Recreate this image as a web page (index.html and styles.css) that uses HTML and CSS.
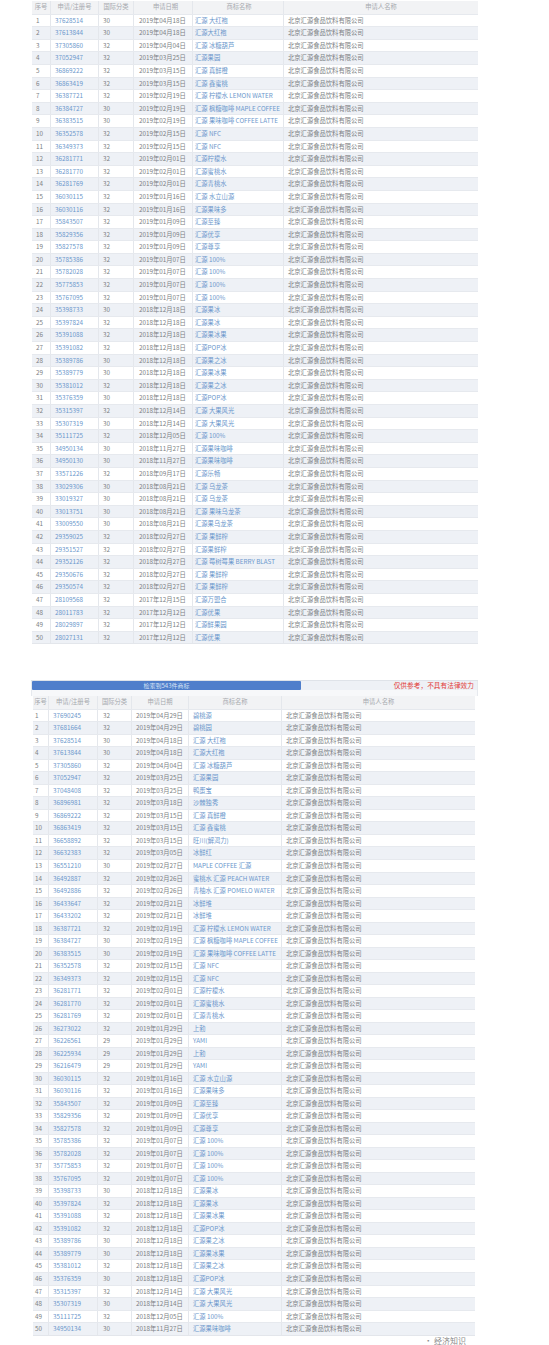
FILE: index.html
```html
<!DOCTYPE html>
<html lang="zh-CN">
<head>
<meta charset="utf-8">
<title>商标列表</title>
<link rel="stylesheet" href="styles.css">
</head>
<body>
<section class="sheet sheet-a">
  <div class="row head"><span>序号</span><span>申请/注册号</span><span>国际分类</span><span>申请日期</span><span>商标名称</span><span>申请人名称</span></div>
  <div class="rows">
    <div class="row"><span>1</span><span class="lk">37628514</span><span>30</span><span>2019年04月18日</span><span class="lk">汇源 大红袍</span><span>北京汇源食品饮料有限公司</span></div>
    <div class="row"><span>2</span><span class="lk">37613844</span><span>30</span><span>2019年04月18日</span><span class="lk">汇源大红袍</span><span>北京汇源食品饮料有限公司</span></div>
    <div class="row"><span>3</span><span class="lk">37305860</span><span>32</span><span>2019年04月04日</span><span class="lk">汇源 冰糖葫芦</span><span>北京汇源食品饮料有限公司</span></div>
    <div class="row"><span>4</span><span class="lk">37052947</span><span>32</span><span>2019年03月25日</span><span class="lk">汇源果园</span><span>北京汇源食品饮料有限公司</span></div>
    <div class="row"><span>5</span><span class="lk">36869222</span><span>32</span><span>2019年03月15日</span><span class="lk">汇源 真鲜橙</span><span>北京汇源食品饮料有限公司</span></div>
    <div class="row"><span>6</span><span class="lk">36863419</span><span>32</span><span>2019年03月15日</span><span class="lk">汇源 鑫蜜桃</span><span>北京汇源食品饮料有限公司</span></div>
    <div class="row"><span>7</span><span class="lk">36387721</span><span>32</span><span>2019年02月19日</span><span class="lk">汇源 柠檬水 LEMON WATER</span><span>北京汇源食品饮料有限公司</span></div>
    <div class="row"><span>8</span><span class="lk">36384727</span><span>30</span><span>2019年02月19日</span><span class="lk">汇源 枫糖咖啡 MAPLE COFFEE</span><span>北京汇源食品饮料有限公司</span></div>
    <div class="row"><span>9</span><span class="lk">36383515</span><span>30</span><span>2019年02月19日</span><span class="lk">汇源 果味咖啡 COFFEE LATTE</span><span>北京汇源食品饮料有限公司</span></div>
    <div class="row"><span>10</span><span class="lk">36352578</span><span>32</span><span>2019年02月15日</span><span class="lk">汇源 NFC</span><span>北京汇源食品饮料有限公司</span></div>
    <div class="row"><span>11</span><span class="lk">36349373</span><span>32</span><span>2019年02月15日</span><span class="lk">汇源 NFC</span><span>北京汇源食品饮料有限公司</span></div>
    <div class="row"><span>12</span><span class="lk">36281771</span><span>32</span><span>2019年02月01日</span><span class="lk">汇源柠檬水</span><span>北京汇源食品饮料有限公司</span></div>
    <div class="row"><span>13</span><span class="lk">36281770</span><span>32</span><span>2019年02月01日</span><span class="lk">汇源蜜桃水</span><span>北京汇源食品饮料有限公司</span></div>
    <div class="row"><span>14</span><span class="lk">36281769</span><span>32</span><span>2019年02月01日</span><span class="lk">汇源青桃水</span><span>北京汇源食品饮料有限公司</span></div>
    <div class="row"><span>15</span><span class="lk">36030115</span><span>32</span><span>2019年01月16日</span><span class="lk">汇源 水立山源</span><span>北京汇源食品饮料有限公司</span></div>
    <div class="row"><span>16</span><span class="lk">36030116</span><span>32</span><span>2019年01月16日</span><span class="lk">汇源果味多</span><span>北京汇源食品饮料有限公司</span></div>
    <div class="row"><span>17</span><span class="lk">35843507</span><span>32</span><span>2019年01月09日</span><span class="lk">汇源至臻</span><span>北京汇源食品饮料有限公司</span></div>
    <div class="row"><span>18</span><span class="lk">35829356</span><span>32</span><span>2019年01月09日</span><span class="lk">汇源优享</span><span>北京汇源食品饮料有限公司</span></div>
    <div class="row"><span>19</span><span class="lk">35827578</span><span>32</span><span>2019年01月09日</span><span class="lk">汇源尊享</span><span>北京汇源食品饮料有限公司</span></div>
    <div class="row"><span>20</span><span class="lk">35785386</span><span>32</span><span>2019年01月07日</span><span class="lk">汇源 100%</span><span>北京汇源食品饮料有限公司</span></div>
    <div class="row"><span>21</span><span class="lk">35782028</span><span>32</span><span>2019年01月07日</span><span class="lk">汇源 100%</span><span>北京汇源食品饮料有限公司</span></div>
    <div class="row"><span>22</span><span class="lk">35775853</span><span>32</span><span>2019年01月07日</span><span class="lk">汇源 100%</span><span>北京汇源食品饮料有限公司</span></div>
    <div class="row"><span>23</span><span class="lk">35767095</span><span>32</span><span>2019年01月07日</span><span class="lk">汇源 100%</span><span>北京汇源食品饮料有限公司</span></div>
    <div class="row"><span>24</span><span class="lk">35398733</span><span>30</span><span>2018年12月18日</span><span class="lk">汇源果冰</span><span>北京汇源食品饮料有限公司</span></div>
    <div class="row"><span>25</span><span class="lk">35397824</span><span>32</span><span>2018年12月18日</span><span class="lk">汇源果冰</span><span>北京汇源食品饮料有限公司</span></div>
    <div class="row"><span>26</span><span class="lk">35391088</span><span>32</span><span>2018年12月18日</span><span class="lk">汇源果冰果</span><span>北京汇源食品饮料有限公司</span></div>
    <div class="row"><span>27</span><span class="lk">35391082</span><span>32</span><span>2018年12月18日</span><span class="lk">汇源POP冰</span><span>北京汇源食品饮料有限公司</span></div>
    <div class="row"><span>28</span><span class="lk">35389786</span><span>30</span><span>2018年12月18日</span><span class="lk">汇源果之冰</span><span>北京汇源食品饮料有限公司</span></div>
    <div class="row"><span>29</span><span class="lk">35389779</span><span>30</span><span>2018年12月18日</span><span class="lk">汇源果冰果</span><span>北京汇源食品饮料有限公司</span></div>
    <div class="row"><span>30</span><span class="lk">35381012</span><span>32</span><span>2018年12月18日</span><span class="lk">汇源果之冰</span><span>北京汇源食品饮料有限公司</span></div>
    <div class="row"><span>31</span><span class="lk">35376359</span><span>30</span><span>2018年12月18日</span><span class="lk">汇源POP冰</span><span>北京汇源食品饮料有限公司</span></div>
    <div class="row"><span>32</span><span class="lk">35315397</span><span>32</span><span>2018年12月14日</span><span class="lk">汇源 大果风光</span><span>北京汇源食品饮料有限公司</span></div>
    <div class="row"><span>33</span><span class="lk">35307319</span><span>30</span><span>2018年12月14日</span><span class="lk">汇源 大果风光</span><span>北京汇源食品饮料有限公司</span></div>
    <div class="row"><span>34</span><span class="lk">35111725</span><span>32</span><span>2018年12月05日</span><span class="lk">汇源 100%</span><span>北京汇源食品饮料有限公司</span></div>
    <div class="row"><span>35</span><span class="lk">34950134</span><span>30</span><span>2018年11月27日</span><span class="lk">汇源果味咖啡</span><span>北京汇源食品饮料有限公司</span></div>
    <div class="row"><span>36</span><span class="lk">34950130</span><span>30</span><span>2018年11月27日</span><span class="lk">汇源果味咖啡</span><span>北京汇源食品饮料有限公司</span></div>
    <div class="row"><span>37</span><span class="lk">33571226</span><span>32</span><span>2018年09月17日</span><span class="lk">汇源乐畅</span><span>北京汇源食品饮料有限公司</span></div>
    <div class="row"><span>38</span><span class="lk">33029306</span><span>30</span><span>2018年08月21日</span><span class="lk">汇源 乌龙茶</span><span>北京汇源食品饮料有限公司</span></div>
    <div class="row"><span>39</span><span class="lk">33019327</span><span>30</span><span>2018年08月21日</span><span class="lk">汇源 乌龙茶</span><span>北京汇源食品饮料有限公司</span></div>
    <div class="row"><span>40</span><span class="lk">33013751</span><span>30</span><span>2018年08月21日</span><span class="lk">汇源 果味乌龙茶</span><span>北京汇源食品饮料有限公司</span></div>
    <div class="row"><span>41</span><span class="lk">33009550</span><span>30</span><span>2018年08月21日</span><span class="lk">汇源果乌龙茶</span><span>北京汇源食品饮料有限公司</span></div>
    <div class="row"><span>42</span><span class="lk">29359025</span><span>32</span><span>2018年02月27日</span><span class="lk">汇源 果鲜榨</span><span>北京汇源食品饮料有限公司</span></div>
    <div class="row"><span>43</span><span class="lk">29351527</span><span>32</span><span>2018年02月27日</span><span class="lk">汇源果鲜榨</span><span>北京汇源食品饮料有限公司</span></div>
    <div class="row"><span>44</span><span class="lk">29352126</span><span>32</span><span>2018年02月27日</span><span class="lk">汇源 莓树莓果 BERRY BLAST</span><span>北京汇源食品饮料有限公司</span></div>
    <div class="row"><span>45</span><span class="lk">29350676</span><span>32</span><span>2018年02月27日</span><span class="lk">汇源 果鲜榨</span><span>北京汇源食品饮料有限公司</span></div>
    <div class="row"><span>46</span><span class="lk">29350574</span><span>32</span><span>2018年02月27日</span><span class="lk">汇源 果鲜榨</span><span>北京汇源食品饮料有限公司</span></div>
    <div class="row"><span>47</span><span class="lk">28109568</span><span>32</span><span>2017年12月15日</span><span class="lk">汇源万盟合</span><span>北京汇源食品饮料有限公司</span></div>
    <div class="row"><span>48</span><span class="lk">28011783</span><span>32</span><span>2017年12月12日</span><span class="lk">汇源优果</span><span>北京汇源食品饮料有限公司</span></div>
    <div class="row"><span>49</span><span class="lk">28029897</span><span>32</span><span>2017年12月12日</span><span class="lk">汇源鲜果园</span><span>北京汇源食品饮料有限公司</span></div>
    <div class="row"><span>50</span><span class="lk">28027131</span><span>32</span><span>2017年12月12日</span><span class="lk">汇源优果</span><span>北京汇源食品饮料有限公司</span></div>
  </div>
</section>

<section class="panel">
  <div class="toolbar">
    <div class="count-bar">检索到543件商标</div>
    <div class="note">仅供参考，不具有法律效力</div>
  </div>
  <div class="sheet sheet-b">
    <div class="row head"><span>序号</span><span>申请/注册号</span><span>国际分类</span><span>申请日期</span><span>商标名称</span><span>申请人名称</span></div>
    <div class="rows">
      <div class="row"><span>1</span><span class="lk">37690245</span><span>32</span><span>2019年04月29日</span><span class="lk">碧桃源</span><span>北京汇源食品饮料有限公司</span></div>
      <div class="row"><span>2</span><span class="lk">37681664</span><span>32</span><span>2019年04月29日</span><span class="lk">碧桃园</span><span>北京汇源食品饮料有限公司</span></div>
      <div class="row"><span>3</span><span class="lk">37628514</span><span>30</span><span>2019年04月18日</span><span class="lk">汇源 大红袍</span><span>北京汇源食品饮料有限公司</span></div>
      <div class="row"><span>4</span><span class="lk">37613844</span><span>30</span><span>2019年04月18日</span><span class="lk">汇源大红袍</span><span>北京汇源食品饮料有限公司</span></div>
      <div class="row"><span>5</span><span class="lk">37305860</span><span>32</span><span>2019年04月04日</span><span class="lk">汇源 冰糖葫芦</span><span>北京汇源食品饮料有限公司</span></div>
      <div class="row"><span>6</span><span class="lk">37052947</span><span>32</span><span>2019年03月25日</span><span class="lk">汇源果园</span><span>北京汇源食品饮料有限公司</span></div>
      <div class="row"><span>7</span><span class="lk">37048408</span><span>32</span><span>2019年03月25日</span><span class="lk">鸭蛋宝</span><span>北京汇源食品饮料有限公司</span></div>
      <div class="row"><span>8</span><span class="lk">36896981</span><span>32</span><span>2019年03月18日</span><span class="lk">沙棘独秀</span><span>北京汇源食品饮料有限公司</span></div>
      <div class="row"><span>9</span><span class="lk">36869222</span><span>32</span><span>2019年03月15日</span><span class="lk">汇源 真鲜橙</span><span>北京汇源食品饮料有限公司</span></div>
      <div class="row"><span>10</span><span class="lk">36863419</span><span>32</span><span>2019年03月15日</span><span class="lk">汇源 鑫蜜桃</span><span>北京汇源食品饮料有限公司</span></div>
      <div class="row"><span>11</span><span class="lk">36658892</span><span>32</span><span>2019年03月15日</span><span class="lk">旺川(解渴力)</span><span>北京汇源食品饮料有限公司</span></div>
      <div class="row"><span>12</span><span class="lk">36632383</span><span>32</span><span>2019年03月05日</span><span class="lk">冰鲜红</span><span>北京汇源食品饮料有限公司</span></div>
      <div class="row"><span>13</span><span class="lk">36551210</span><span>30</span><span>2019年02月27日</span><span class="lk">MAPLE COFFEE 汇源</span><span>北京汇源食品饮料有限公司</span></div>
      <div class="row"><span>14</span><span class="lk">36492887</span><span>32</span><span>2019年02月26日</span><span class="lk">蜜桃水 汇源 PEACH WATER</span><span>北京汇源食品饮料有限公司</span></div>
      <div class="row"><span>15</span><span class="lk">36492886</span><span>32</span><span>2019年02月26日</span><span class="lk">青柚水 汇源 POMELO WATER</span><span>北京汇源食品饮料有限公司</span></div>
      <div class="row"><span>16</span><span class="lk">36433647</span><span>32</span><span>2019年02月21日</span><span class="lk">冰鲜堆</span><span>北京汇源食品饮料有限公司</span></div>
      <div class="row"><span>17</span><span class="lk">36433202</span><span>32</span><span>2019年02月21日</span><span class="lk">冰鲜堆</span><span>北京汇源食品饮料有限公司</span></div>
      <div class="row"><span>18</span><span class="lk">36387721</span><span>32</span><span>2019年02月19日</span><span class="lk">汇源 柠檬水 LEMON WATER</span><span>北京汇源食品饮料有限公司</span></div>
      <div class="row"><span>19</span><span class="lk">36384727</span><span>30</span><span>2019年02月19日</span><span class="lk">汇源 枫糖咖啡 MAPLE COFFEE</span><span>北京汇源食品饮料有限公司</span></div>
      <div class="row"><span>20</span><span class="lk">36383515</span><span>30</span><span>2019年02月19日</span><span class="lk">汇源 果味咖啡 COFFEE LATTE</span><span>北京汇源食品饮料有限公司</span></div>
      <div class="row"><span>21</span><span class="lk">36352578</span><span>32</span><span>2019年02月15日</span><span class="lk">汇源 NFC</span><span>北京汇源食品饮料有限公司</span></div>
      <div class="row"><span>22</span><span class="lk">36349373</span><span>32</span><span>2019年02月15日</span><span class="lk">汇源 NFC</span><span>北京汇源食品饮料有限公司</span></div>
      <div class="row"><span>23</span><span class="lk">36281771</span><span>32</span><span>2019年02月01日</span><span class="lk">汇源柠檬水</span><span>北京汇源食品饮料有限公司</span></div>
      <div class="row"><span>24</span><span class="lk">36281770</span><span>32</span><span>2019年02月01日</span><span class="lk">汇源蜜桃水</span><span>北京汇源食品饮料有限公司</span></div>
      <div class="row"><span>25</span><span class="lk">36281769</span><span>32</span><span>2019年02月01日</span><span class="lk">汇源青桃水</span><span>北京汇源食品饮料有限公司</span></div>
      <div class="row"><span>26</span><span class="lk">36273022</span><span>32</span><span>2019年01月29日</span><span class="lk">上勃</span><span>北京汇源食品饮料有限公司</span></div>
      <div class="row"><span>27</span><span class="lk">36226561</span><span>29</span><span>2019年01月29日</span><span class="lk">YAMI</span><span>北京汇源食品饮料有限公司</span></div>
      <div class="row"><span>28</span><span class="lk">36225934</span><span>29</span><span>2019年01月29日</span><span class="lk">上勃</span><span>北京汇源食品饮料有限公司</span></div>
      <div class="row"><span>29</span><span class="lk">36216479</span><span>29</span><span>2019年01月29日</span><span class="lk">YAMI</span><span>北京汇源食品饮料有限公司</span></div>
      <div class="row"><span>30</span><span class="lk">36030115</span><span>32</span><span>2019年01月16日</span><span class="lk">汇源 水立山源</span><span>北京汇源食品饮料有限公司</span></div>
      <div class="row"><span>31</span><span class="lk">36030116</span><span>32</span><span>2019年01月16日</span><span class="lk">汇源果味多</span><span>北京汇源食品饮料有限公司</span></div>
      <div class="row"><span>32</span><span class="lk">35843507</span><span>32</span><span>2019年01月09日</span><span class="lk">汇源至臻</span><span>北京汇源食品饮料有限公司</span></div>
      <div class="row"><span>33</span><span class="lk">35829356</span><span>32</span><span>2019年01月09日</span><span class="lk">汇源优享</span><span>北京汇源食品饮料有限公司</span></div>
      <div class="row"><span>34</span><span class="lk">35827578</span><span>32</span><span>2019年01月09日</span><span class="lk">汇源尊享</span><span>北京汇源食品饮料有限公司</span></div>
      <div class="row"><span>35</span><span class="lk">35785386</span><span>32</span><span>2019年01月07日</span><span class="lk">汇源 100%</span><span>北京汇源食品饮料有限公司</span></div>
      <div class="row"><span>36</span><span class="lk">35782028</span><span>32</span><span>2019年01月07日</span><span class="lk">汇源 100%</span><span>北京汇源食品饮料有限公司</span></div>
      <div class="row"><span>37</span><span class="lk">35775853</span><span>32</span><span>2019年01月07日</span><span class="lk">汇源 100%</span><span>北京汇源食品饮料有限公司</span></div>
      <div class="row"><span>38</span><span class="lk">35767095</span><span>32</span><span>2019年01月07日</span><span class="lk">汇源 100%</span><span>北京汇源食品饮料有限公司</span></div>
      <div class="row"><span>39</span><span class="lk">35398733</span><span>30</span><span>2018年12月18日</span><span class="lk">汇源果冰</span><span>北京汇源食品饮料有限公司</span></div>
      <div class="row"><span>40</span><span class="lk">35397824</span><span>32</span><span>2018年12月18日</span><span class="lk">汇源果冰</span><span>北京汇源食品饮料有限公司</span></div>
      <div class="row"><span>41</span><span class="lk">35391088</span><span>32</span><span>2018年12月18日</span><span class="lk">汇源果冰果</span><span>北京汇源食品饮料有限公司</span></div>
      <div class="row"><span>42</span><span class="lk">35391082</span><span>32</span><span>2018年12月18日</span><span class="lk">汇源POP冰</span><span>北京汇源食品饮料有限公司</span></div>
      <div class="row"><span>43</span><span class="lk">35389786</span><span>30</span><span>2018年12月18日</span><span class="lk">汇源果之冰</span><span>北京汇源食品饮料有限公司</span></div>
      <div class="row"><span>44</span><span class="lk">35389779</span><span>30</span><span>2018年12月18日</span><span class="lk">汇源果冰果</span><span>北京汇源食品饮料有限公司</span></div>
      <div class="row"><span>45</span><span class="lk">35381012</span><span>32</span><span>2018年12月18日</span><span class="lk">汇源果之冰</span><span>北京汇源食品饮料有限公司</span></div>
      <div class="row"><span>46</span><span class="lk">35376359</span><span>30</span><span>2018年12月18日</span><span class="lk">汇源POP冰</span><span>北京汇源食品饮料有限公司</span></div>
      <div class="row"><span>47</span><span class="lk">35315397</span><span>32</span><span>2018年12月14日</span><span class="lk">汇源 大果风光</span><span>北京汇源食品饮料有限公司</span></div>
      <div class="row"><span>48</span><span class="lk">35307319</span><span>30</span><span>2018年12月14日</span><span class="lk">汇源 大果风光</span><span>北京汇源食品饮料有限公司</span></div>
      <div class="row"><span>49</span><span class="lk">35111725</span><span>32</span><span>2018年12月05日</span><span class="lk">汇源 100%</span><span>北京汇源食品饮料有限公司</span></div>
      <div class="row"><span>50</span><span class="lk">34950134</span><span>30</span><span>2018年11月27日</span><span class="lk">汇源果味咖啡</span><span>北京汇源食品饮料有限公司</span></div>
    </div>
  </div>
  <div class="mark">· 经济知识</div>
</section>
</body>
</html>
```
FILE: styles.css
```css
html, body {
  margin: 0;
  padding: 0;
  background: #ffffff;
}
body {
  font-family: "Noto Sans CJK SC", "Noto Sans", sans-serif;
  font-size: 6.3px;
  color: #7c7f84;
}
.sheet {
  display: flex;
  flex-direction: column;
  box-sizing: border-box;
}
.sheet-a {
  width: 446px;
  margin: 1px 0 0 32px;
  border-bottom: 1px solid #e3e6eb;
}
.row {
  display: grid;
  height: 12.6px;
  line-height: 12.6px;
  border-top: 1px solid #e6e9ee;
  box-sizing: border-box;
  background: #ffffff;
}
.sheet-a .row {
  grid-template-columns: 18px 48px 35px 59px 91px 1fr;
}
.row > span {
  white-space: nowrap;
  overflow: hidden;
  padding-left: 4px;
  border-left: 1px solid #e4e7ec;
}
.row > span:first-child {
  border-left: none;
}
.sheet-a .row > span:nth-child(4) {
  padding-left: 5px;
}
.sheet-a .row > span:nth-child(5) {
  padding-left: 2px;
}
.rows .row:nth-child(even) {
  background: #eef1f6;
}
.row.head {
  background: #f2f3f5;
  color: #a6a9ae;
  border-top: none;
}
.row.head > span {
  text-align: center;
  padding-left: 0;
}
.lk {
  color: #6b97cc;
}

.panel {
  width: 447px;
  margin: 36px 0 0 31px;
  border-top: 1px solid #dfe3e9;
  display: flex;
  flex-direction: column;
}
.toolbar {
  height: 15px;
  display: flex;
  justify-content: space-between;
  background: linear-gradient(#eef1f6 0, #eef1f6 9px, #f7f8fa 9px);
  border-left: 1px solid #e6e9ee;
  border-right: 1px solid #e6e9ee;
}
.count-bar {
  width: 269px;
  height: 9px;
  line-height: 9px;
  background: #4f7ecb;
  color: #d8e4f6;
  text-align: center;
  font-size: 6px;
  border-radius: 1px;
}
.note {
  color: #e23a35;
  font-size: 6.6px;
  line-height: 8px;
  padding-right: 3px;
  letter-spacing: 0.1px;
}
.sheet-b {
  width: 442px;
  margin-left: 2px;
  border-bottom: 1px solid #e3e6eb;
}
.sheet-b .row {
  grid-template-columns: 15px 49px 34px 57px 93px 1fr;
  height: 12.53px;
  line-height: 12.53px;
}
.sheet-b .row > span:nth-child(3) {
  padding-left: 5px;
}
.sheet-b .row > span:nth-child(5) {
  padding-left: 4px;
}
.sheet-b .row > span:first-child {
  padding-left: 2px;
}
.sheet-b .row.head > span {
  padding-left: 0;
}
.mark {
  align-self: flex-end;
  margin: 0 12px 0 0;
  color: #8a8a8a;
  font-size: 8px;
  line-height: 10px;
}
```
